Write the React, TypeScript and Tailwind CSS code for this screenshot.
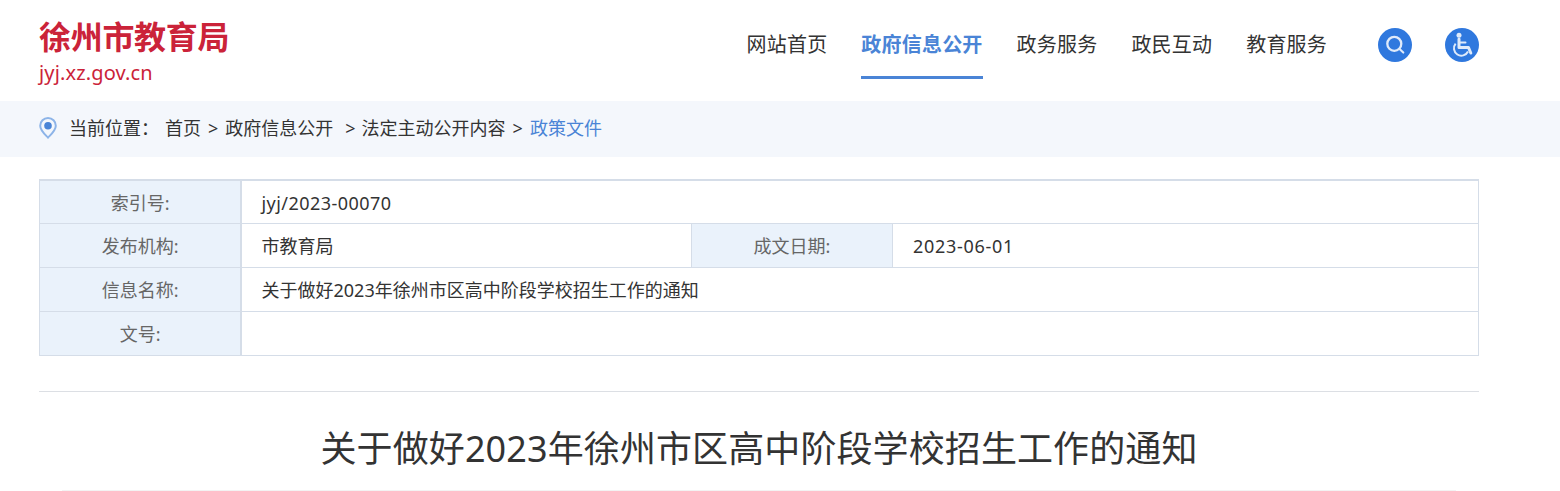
import React from "react";

const font = "font-['Noto_Sans','Noto_Sans_CJK_SC',sans-serif]";

const NavItem = ({ label, active }: { label: string; active?: boolean }) => (
  <a
    className={
      active
        ? "h-[79px] pt-[28px] text-[20px] leading-[34px] tracking-[0.2px] font-bold text-[#4a84d6] border-b-[3px] border-[#4a84d6]"
        : "h-[79px] pt-[28px] text-[20px] leading-[34px] tracking-[0.2px] text-[#333]"
    }
  >
    {label}
  </a>
);

const SearchIcon = () => (
  <svg width="34" height="34" viewBox="0 0 34 34" className="block">
    <circle cx="17" cy="17" r="17" fill="#2f78de" />
    <circle cx="16.3" cy="15.8" r="7" fill="none" stroke="#dfeafa" strokeWidth="2.3" />
    <path d="M21.3 20.8 L25.3 24.6" stroke="#dfeafa" strokeWidth="2.1" strokeLinecap="round" />
  </svg>
);

const WheelchairIcon = () => (
  <svg width="34" height="34" viewBox="0 0 34 34" className="block">
    <circle cx="17" cy="17" r="17" fill="#2f78de" />
    <circle cx="14" cy="7.2" r="2.5" fill="#dfeafa" />
    <path d="M14 11 V19.5 H23.5 L25.8 25" fill="none" stroke="#dfeafa" strokeWidth="3" strokeLinecap="round" strokeLinejoin="round" />
    <path d="M14 14.5 H20.5" stroke="#dfeafa" strokeWidth="2" strokeLinecap="round" />
    <path d="M10.6 15.6 A7.4 7.4 0 1 0 23 23.5" fill="none" stroke="#dfeafa" strokeWidth="2" />
  </svg>
);

const PinIcon = () => (
  <svg width="18" height="22" viewBox="0 0 18 22" className="block">
    <path d="M9 1 C4.6 1 1.2 4.4 1.2 8.7 C1.2 13.4 6.2 17.6 9 20.6 C11.8 17.6 16.8 13.4 16.8 8.7 C16.8 4.4 13.4 1 9 1 Z" fill="none" stroke="#8db4e8" strokeWidth="2" />
    <circle cx="9" cy="8.8" r="3.8" fill="#4a84d6" />
  </svg>
);

const Label = ({ children, first }: { children: React.ReactNode; first?: boolean }) => (
  <th
    className={
      first
        ? "bg-[#eaf2fb] border border-r-2 border-[#d5dde8] pt-[3px] pl-px font-normal text-center text-[#666] align-middle"
        : "bg-[#eaf2fb] border border-[#d5dde8] pt-[3px] font-normal text-center text-[#666] align-middle"
    }
  >
    {children}
  </th>
);

const Value = ({ children, colSpan }: { children?: React.ReactNode; colSpan?: number }) => (
  <td colSpan={colSpan} className="border border-[#d5dde8] pl-5 pt-[3px] text-left text-[#333] align-middle">
    {children}
  </td>
);

export default function App() {
  return (
    <div className={`${font} w-[1560px] h-[491px] overflow-hidden bg-white`}>
      <header className="h-[101px] pl-[39px] pr-[81px] flex justify-between">
        <div className="pt-[15px]">
          <div className="text-[32px] leading-[44px] font-bold tracking-[-0.3px] text-[#cb2339]">徐州市教育局</div>
          <div className="text-[20px] leading-[28px] tracking-[0.15px] text-[#cb2339]">jyj.xz.gov.cn</div>
        </div>
        <div className="flex items-start">
          <nav className="flex gap-[34px]">
            <NavItem label="网站首页" />
            <NavItem label="政府信息公开" active />
            <NavItem label="政务服务" />
            <NavItem label="政民互动" />
            <NavItem label="教育服务" />
          </nav>
          <div className="ml-[51px] pt-[28px] flex gap-[33px]">
            <SearchIcon />
            <WheelchairIcon />
          </div>
        </div>
      </header>

      <div className="h-[56px] bg-[#f4f7fc] px-[39px] pb-[2px] flex items-center text-[18px] text-[#333]">
        <PinIcon />
        <span className="ml-[12px]">当前位置：</span>
        <span className="ml-[6px]">首页</span>
        <span className="ml-[7px]">&gt;</span>
        <span className="ml-[7px]">政府信息公开</span>
        <span className="ml-[12px]">&gt;</span>
        <span className="ml-[6px]">法定主动公开内容</span>
        <span className="ml-[7px]">&gt;</span>
        <span className="ml-[7px] text-[#4a84d6]">政策文件</span>
      </div>

      <div className="w-[1440px] ml-[39px] pt-[22px]">
        <table className="w-[1440px] table-fixed border-collapse text-[18px] border-t-2 border-[#d5dde8]">
          <colgroup>
            <col className="w-[201px]" />
            <col className="w-[451px]" />
            <col className="w-[201px]" />
            <col />
          </colgroup>
          <tbody>
            <tr className="h-[43px]">
              <Label first>索引号:</Label>
              <Value colSpan={3}>
                <span className="tracking-[0.45px]">jyj/2023-00070</span>
              </Value>
            </tr>
            <tr className="h-[44px]">
              <Label first>发布机构:</Label>
              <Value>市教育局</Value>
              <Label>成文日期:</Label>
              <Value>
                <span className="tracking-[0.7px]">2023-06-01</span>
              </Value>
            </tr>
            <tr className="h-[44px]">
              <Label first>信息名称:</Label>
              <Value colSpan={3}>关于做好2023年徐州市区高中阶段学校招生工作的通知</Value>
            </tr>
            <tr className="h-[44px]">
              <Label first>文号:</Label>
              <Value colSpan={3} />
            </tr>
          </tbody>
        </table>

        <div className="mt-[35px] border-t border-[#dcdfe4]" />
        <div className="mx-[23px] border-b border-[#f3f3f3] pt-[29px] pb-[13px]">
          <h1 className="text-center text-[36px] leading-[56px] tracking-[0.1px] text-[#333]">
            关于做好2023年徐州市区高中阶段学校招生工作的通知
          </h1>
        </div>
      </div>
    </div>
  );
}
